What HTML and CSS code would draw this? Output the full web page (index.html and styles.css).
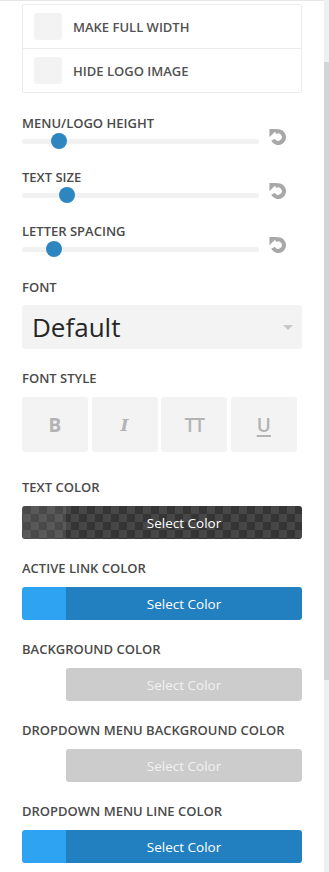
FILE: index.html
```html
<!DOCTYPE html>
<html lang="en">
  <head>
    <meta charset="UTF-8" />
    <title>Menu settings</title>
    <link rel="stylesheet" href="styles.css">
  </head>
  <body>
    <div class="page">
      <div class="panel">
        <div class="check-list">
          <div class="check-row">
            <span class="check-box"></span>
            <span class="check-label">Make full width</span>
          </div>
          <div class="check-row">
            <span class="check-box"></span>
            <span class="check-label">Hide logo image</span>
          </div>
        </div>

        <div class="slider-field">
          <div class="field-label">Menu/Logo height</div>
          <div class="slider-row">
            <div class="slider-track">
              <span class="slider-thumb" style="left: 29px"></span>
            </div>
            <svg class="reset-icon" width="17" height="17" viewBox="0 0 16 16">
              <circle cx="8.6" cy="8.6" r="5.4" fill="none" stroke="#a8a8a8" stroke-width="4" stroke-dasharray="25 9" transform="rotate(-120 8.6 8.6)" />
              <path d="M0.4 1 H8.2 L0.4 8.8 Z" fill="#a8a8a8" />
            </svg>
          </div>
        </div>

        <div class="slider-field">
          <div class="field-label">Text size</div>
          <div class="slider-row">
            <div class="slider-track">
              <span class="slider-thumb" style="left: 37px"></span>
            </div>
            <svg class="reset-icon" width="17" height="17" viewBox="0 0 16 16">
              <circle cx="8.6" cy="8.6" r="5.4" fill="none" stroke="#a8a8a8" stroke-width="4" stroke-dasharray="25 9" transform="rotate(-120 8.6 8.6)" />
              <path d="M0.4 1 H8.2 L0.4 8.8 Z" fill="#a8a8a8" />
            </svg>
          </div>
        </div>

        <div class="slider-field">
          <div class="field-label">Letter spacing</div>
          <div class="slider-row">
            <div class="slider-track">
              <span class="slider-thumb" style="left: 24px"></span>
            </div>
            <svg class="reset-icon" width="17" height="17" viewBox="0 0 16 16">
              <circle cx="8.6" cy="8.6" r="5.4" fill="none" stroke="#a8a8a8" stroke-width="4" stroke-dasharray="25 9" transform="rotate(-120 8.6 8.6)" />
              <path d="M0.4 1 H8.2 L0.4 8.8 Z" fill="#a8a8a8" />
            </svg>
          </div>
        </div>

        <div class="select-field">
          <div class="field-label">Font</div>
          <div class="font-select">
            <span>Default</span>
            <span class="select-arrow"></span>
          </div>
        </div>

        <div class="style-field">
          <div class="field-label">Font style</div>
          <div class="style-buttons">
            <div class="style-btn bold">B</div>
            <div class="style-btn italic">I</div>
            <div class="style-btn caps">TT</div>
            <div class="style-btn under">U</div>
          </div>
        </div>

        <div class="color-field">
          <div class="field-label">Text color</div>
          <div class="color-bar checker">
            <span class="swatch"></span>
            <span class="select-btn">Select Color</span>
          </div>
        </div>

        <div class="color-field">
          <div class="field-label">Active link color</div>
          <div class="color-bar blue">
            <span class="swatch"></span>
            <span class="select-btn">Select Color</span>
          </div>
        </div>

        <div class="color-field">
          <div class="field-label">Background color</div>
          <div class="color-bar empty">
            <span class="swatch"></span>
            <span class="select-btn">Select Color</span>
          </div>
        </div>

        <div class="color-field">
          <div class="field-label">Dropdown menu background color</div>
          <div class="color-bar empty">
            <span class="swatch"></span>
            <span class="select-btn">Select Color</span>
          </div>
        </div>

        <div class="color-field">
          <div class="field-label">Dropdown menu line color</div>
          <div class="color-bar blue">
            <span class="swatch"></span>
            <span class="select-btn">Select Color</span>
          </div>
        </div>
      </div>

      <div class="scrollbar">
        <div class="scroll-thumb"></div>
      </div>
    </div>
  </body>
</html>
```

FILE: styles.css
```css
body {
  margin: 0;
  background-color: #fff;
  font-family: "Open Sans", "Liberation Sans", sans-serif;
  color: #4e4e4e;
}

.page {
  display: flex;
  height: 872px;
  overflow: hidden;
}

.panel {
  width: 324px;
  box-sizing: border-box;
  border-top: 1px solid #e6e6e6;
  padding: 3px 22px 0 22px;
}

.scrollbar {
  width: 5px;
  background-color: #f0f0f0;
}

.scroll-thumb {
  margin-top: 62px;
  height: 618px;
  background-color: #d5d5d5;
}

/* checkboxes */
.check-list {
  width: 280px;
  box-sizing: border-box;
  border: 1px solid #ebebeb;
  border-radius: 2px;
}

.check-row {
  display: flex;
  align-items: center;
  height: 43px;
  padding-left: 11px;
}

.check-row + .check-row {
  border-top: 1px solid #ebebeb;
}

.check-box {
  width: 28px;
  height: 27px;
  background-color: #f3f3f3;
  border-radius: 3px;
}

.check-label {
  margin-left: 11px;
  font-size: 13px;
  font-weight: 600;
  text-transform: uppercase;
  color: #525252;
}

.field-label {
  font-size: 13px;
  font-weight: 600;
  line-height: 16px;
  text-transform: uppercase;
  color: #4a4a4a;
}

/* sliders */
.slider-field {
  height: 54px;
}

.check-list + .slider-field {
  margin-top: 22px;
}

.slider-row {
  display: flex;
  align-items: center;
  height: 20px;
}

.slider-track {
  position: relative;
  width: 237px;
  height: 5px;
  border-radius: 3px;
  background-color: #f1f1f1;
}

.slider-thumb {
  position: absolute;
  top: -5.5px;
  width: 16px;
  height: 16px;
  border-radius: 50%;
  background-color: #2e86c0;
}

.reset-icon {
  flex: none;
  width: 17px;
  height: 17px;
  margin-left: 10px;
  margin-top: -10px;
}

/* font select */
.select-field {
  margin-top: 2px;
}

.font-select {
  display: flex;
  align-items: center;
  justify-content: space-between;
  height: 44px;
  margin-top: 10px;
  padding: 0 9px 0 10px;
  width: 280px;
  box-sizing: border-box;
  background-color: #f3f3f3;
  border-radius: 3px;
  font-size: 26px;
  color: #262626;
}

.select-arrow {
  width: 0;
  height: 0;
  border-left: 5px solid transparent;
  border-right: 5px solid transparent;
  border-top: 5px solid #c9c9c9;
}

/* font style buttons */
.style-field {
  margin-top: 21px;
}

.style-buttons {
  display: flex;
  gap: 3.6px;
  margin-top: 11px;
}

.style-btn {
  display: flex;
  align-items: center;
  justify-content: center;
  width: 66px;
  height: 55px;
  background-color: #f3f3f3;
  border-radius: 3px;
  font-size: 19px;
  font-weight: 700;
  color: #b3b3b3;
}

.style-btn.italic {
  font-family: "DejaVu Serif", serif;
  font-style: italic;
  font-weight: 700;
  font-size: 17px;
}

.style-btn.caps {
  font-weight: 600;
  letter-spacing: -1px;
}

.style-btn.under {
  font-weight: 600;
  text-decoration: underline;
  text-underline-offset: 3px;
  text-decoration-thickness: 2px;
}

/* color pickers */
.color-field {
  margin-top: 21px;
}

.style-field + .color-field {
  margin-top: 27px;
}

.color-bar {
  display: flex;
  height: 33px;
  width: 280px;
  margin-top: 11px;
  border-radius: 3px;
  overflow: hidden;
}

.swatch {
  width: 44px;
}

.select-btn {
  flex: 1;
  display: flex;
  align-items: center;
  justify-content: center;
  font-size: 13.5px;
  color: #fff;
}

.color-bar.checker {
  background-color: #3a3a3a;
  background-image: conic-gradient(#474747 25%, #353535 0 50%, #474747 0 75%, #353535 0);
  background-size: 16px 16px;
  background-position: 1px 0;
}

.color-bar.checker .swatch {
  background-color: rgba(255, 255, 255, 0.1);
}

.color-bar.blue .swatch {
  background-color: #2ea3f2;
}

.color-bar.blue .select-btn {
  background-color: #2380c0;
}

.color-bar.empty .select-btn {
  background-color: #cccccc;
  color: #f1f1f1;
  border-radius: 3px;
}
```
